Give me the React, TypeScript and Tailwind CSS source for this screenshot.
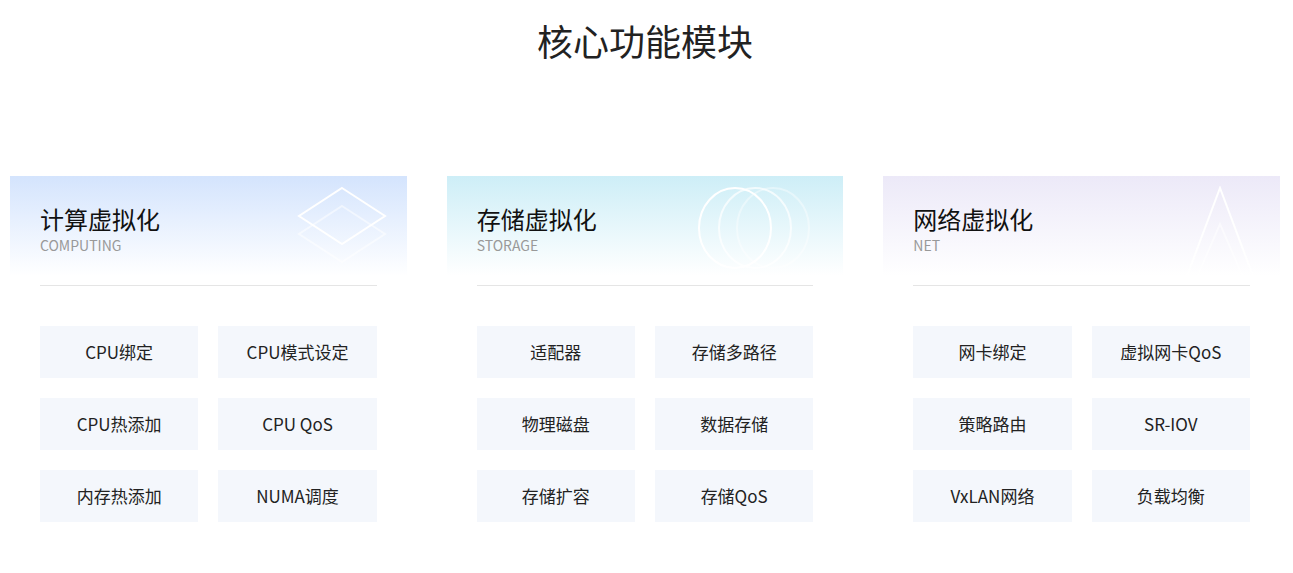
const cards = [
  {
    title: '计算虚拟化',
    sub: 'COMPUTING',
    bg: 'from-[#d4e4fd]',
    items: ['CPU绑定', 'CPU模式设定', 'CPU热添加', 'CPU QoS', '内存热添加', 'NUMA调度'],
    icon: (
      <svg width="90" height="80" viewBox="0 0 90 80" fill="none" stroke="white" strokeWidth="2">
        <path d="M45 2 L88 30 L45 58 L2 30 Z" />
        <path d="M45 20 L88 48 L45 76 L2 48 Z" opacity="0.5" />
      </svg>
    ),
  },
  {
    title: '存储虚拟化',
    sub: 'STORAGE',
    bg: 'from-[#cdeef7]',
    items: ['适配器', '存储多路径', '物理磁盘', '数据存储', '存储扩容', '存储QoS'],
    icon: (
      <svg width="130" height="84" viewBox="0 0 130 84" fill="none" stroke="white" strokeWidth="2">
        <ellipse cx="42" cy="42" rx="36" ry="40" />
        <ellipse cx="62" cy="42" rx="36" ry="40" opacity="0.7" />
        <ellipse cx="80" cy="42" rx="36" ry="40" opacity="0.4" />
      </svg>
    ),
  },
  {
    title: '网络虚拟化',
    sub: 'NET',
    bg: 'from-[#ece9f8]',
    items: ['网卡绑定', '虚拟网卡QoS', '策略路由', 'SR-IOV', 'VxLAN网络', '负载均衡'],
    icon: (
      <svg width="80" height="100" viewBox="0 0 80 100" fill="none" stroke="white" strokeWidth="2">
        <path d="M4 98 L40 2 L76 98" />
        <path d="M14 98 L40 38 L66 98" opacity="0.5" />
      </svg>
    ),
  },
];

export default function App() {
  return (
    <div className="min-h-[573px] bg-white pl-[10px] pr-[13px]" style={{ fontFamily: '"Noto Sans CJK SC", "Noto Sans", sans-serif' }}>
      <h1 className="pt-[14px] text-center text-[36px] leading-[52px] text-[#222]">核心功能模块</h1>
      <div className="mt-[110px] grid grid-cols-3 gap-[40px]">
        {cards.map((c) => (
          <div key={c.title} className="relative">
            <div className={`relative h-[100px] overflow-hidden bg-gradient-to-b ${c.bg} to-white px-[30px] pt-[26px]`}>
              <div className="absolute right-[20px] top-[10px]">{c.icon}</div>
              <div className="relative text-[24px] leading-[34px] text-[#111]">{c.title}</div>
              <div className="relative text-[14px] leading-[18px] text-[#999]">{c.sub}</div>
            </div>
            <div className="mx-[30px] mt-[9px] border-t border-[#e5e5e5]" />
            <div className="mx-[30px] mt-[40px] grid grid-cols-2 gap-x-[20px] gap-y-[20px]">
              {c.items.map((it) => (
                <div key={it} className="flex h-[52px] items-center justify-center bg-[#f4f7fc] text-[17px] text-[#222]">
                  {it}
                </div>
              ))}
            </div>
          </div>
        ))}
      </div>
    </div>
  );
}
